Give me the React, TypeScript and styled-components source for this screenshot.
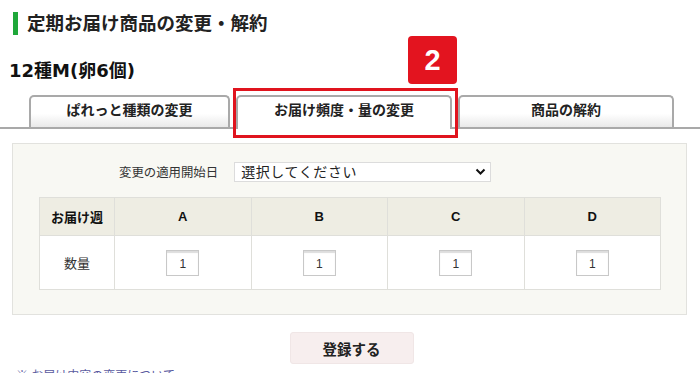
import styled, { createGlobalStyle } from 'styled-components'

const GlobalStyle = createGlobalStyle`
  html, body {
    margin: 0;
    padding: 0;
    background: #fff;
    font-family: "Liberation Sans", "Noto Sans CJK JP", sans-serif;
    color: #222;
    overflow: hidden;
  }
`

const Page = styled.div`
  width: 700px;
  height: 373px;
  overflow: hidden;
  position: relative;
`

const Title = styled.h2`
  margin: 12px 0 0 13px;
  padding-left: 9px;
  border-left: 5px solid #1fa83a;
  font-size: 18.5px;
  line-height: 23px;
  font-weight: bold;
  color: #222;
`

const ProductName = styled.h3`
  margin: 25px 0 0 9px;
  font-family: "DejaVu Sans", "Noto Sans CJK JP", sans-serif;
  font-size: 18px;
  line-height: 22px;
  font-weight: bold;
  color: #111;
`

const TabBar = styled.div`
  position: relative;
  display: flex;
  gap: 6px;
  margin-top: 13px;
  padding-left: 29px;
  height: 32px;
  border-bottom: 2px solid #a9a9a9;
`

const Tab = styled.div<{ $w: number; $active?: boolean }>`
  width: ${(p) => p.$w}px;
  box-sizing: border-box;
  height: ${(p) => (p.$active ? 34 : 32)}px;
  margin-bottom: ${(p) => (p.$active ? -2 : 0)}px;
  border: 2px solid #a9a9a9;
  border-bottom: none;
  border-radius: 5px 5px 0 0;
  background: ${(p) =>
    p.$active ? '#fff' : 'linear-gradient(#ffffff 55%, #e9e9e9 100%)'};
  display: flex;
  justify-content: center;
  padding-top: 4px;
  font-size: 14px;
  font-weight: bold;
  color: #222;
  line-height: 18px;
`

const Highlight = styled.div`
  position: absolute;
  left: 233px;
  top: -7px;
  width: 225px;
  height: 50px;
  box-sizing: border-box;
  border: 3px solid #e0141e;
  pointer-events: none;
`

const Badge = styled.div`
  position: absolute;
  left: 408px;
  top: -59px;
  width: 49px;
  height: 48px;
  border-radius: 4px;
  background: #e3141f;
  color: #fff;
  font-size: 29px;
  font-weight: bold;
  display: flex;
  align-items: center;
  justify-content: center;
`

const Panel = styled.div`
  margin: 14px 0 0 12px;
  width: 675px;
  box-sizing: border-box;
  background: #f8f8f3;
  border: 1px solid #e2e2de;
  padding: 18px 26px 24px;
`

const DateRow = styled.div`
  display: flex;
  align-items: center;
  gap: 16px;
  padding-left: 80px;
  height: 20px;
`

const Label = styled.span`
  font-size: 12.4px;
  color: #333;
`

const SelectWrap = styled.div`
  position: relative;
  width: 257px;
  height: 20px;
`

const Select = styled.select`
  appearance: none;
  width: 100%;
  height: 100%;
  box-sizing: border-box;
  border: 1px solid #dcdcdc;
  background: #fff;
  font-family: "Liberation Sans", "Noto Sans CJK JP", sans-serif;
  font-size: 14px;
  color: #222;
  padding: 0 6px;
  letter-spacing: 0.6px;
`

const Chevron = styled.svg`
  position: absolute;
  right: 5px;
  top: 6px;
  pointer-events: none;
`

const Table = styled.table`
  margin: 15px 0 0 0;
  width: 622px;
  border-collapse: collapse;
  background: #fff;
`

const Th = styled.th<{ $w?: number }>`
  width: ${(p) => (p.$w ? `${p.$w}px` : 'auto')};
  height: 37px;
  background: #eeede3;
  border: 1px solid #dfdfda;
  font-size: 13px;
  font-weight: bold;
  color: #111;
  padding: 0;
`

const Td = styled.td`
  height: 53px;
  border: 1px solid #dfdfda;
  text-align: center;
  font-size: 13px;
  color: #333;
  padding: 0;
`

const QtyInput = styled.input`
  width: 33px;
  height: 26px;
  box-sizing: border-box;
  border: 1px solid #c8c8c8;
  box-shadow: inset 0 2px 1px #ddd;
  text-align: center;
  font-family: "Liberation Sans", sans-serif;
  font-size: 12px;
  color: #333;
  padding: 2px 0 0;
`

const ButtonRow = styled.div`
  display: flex;
  justify-content: center;
  padding-left: 3px;
  margin-top: 17px;
`

const SubmitButton = styled.button`
  width: 124px;
  height: 32px;
  border: 1px solid #f0e6e6;
  border-radius: 3px;
  background: #f7eeee;
  font-family: "Liberation Sans", "Noto Sans CJK JP", sans-serif;
  font-size: 14.5px;
  font-weight: bold;
  color: #222;
`

const Note = styled.p`
  margin: 4px 0 0 16px;
  font-size: 12px;
  line-height: 16px;
  color: #5a5aa0;
`

const weeks = ['A', 'B', 'C', 'D']

export default function App() {
  return (
    <Page>
      <GlobalStyle />
      <Title>定期お届け商品の変更・解約</Title>
      <ProductName>12種M(卵6個)</ProductName>
      <TabBar>
        <Tab $w={201}>ぱれっと種類の変更</Tab>
        <Tab $w={216} $active>
          お届け頻度・量の変更
        </Tab>
        <Tab $w={216}>商品の解約</Tab>
        <Highlight />
        <Badge>2</Badge>
      </TabBar>
      <Panel>
        <DateRow>
          <Label>変更の適用開始日</Label>
          <SelectWrap>
            <Select defaultValue="">
              <option value="">選択してください</option>
            </Select>
            <Chevron width="11" height="8" viewBox="0 0 11 8">
              <path d="M1.5 1.5 L5.5 5.5 L9.5 1.5" fill="none" stroke="#111" strokeWidth="2" />
            </Chevron>
          </SelectWrap>
        </DateRow>
        <Table>
          <thead>
            <tr>
              <Th $w={74}>お届け週</Th>
              {weeks.map((w) => (
                <Th key={w}>{w}</Th>
              ))}
            </tr>
          </thead>
          <tbody>
            <tr>
              <Td>数量</Td>
              {weeks.map((w) => (
                <Td key={w}>
                  <QtyInput defaultValue="1" />
                </Td>
              ))}
            </tr>
          </tbody>
        </Table>
      </Panel>
      <ButtonRow>
        <SubmitButton>登録する</SubmitButton>
      </ButtonRow>
      <Note>※ お届け内容の変更について</Note>
    </Page>
  )
}
